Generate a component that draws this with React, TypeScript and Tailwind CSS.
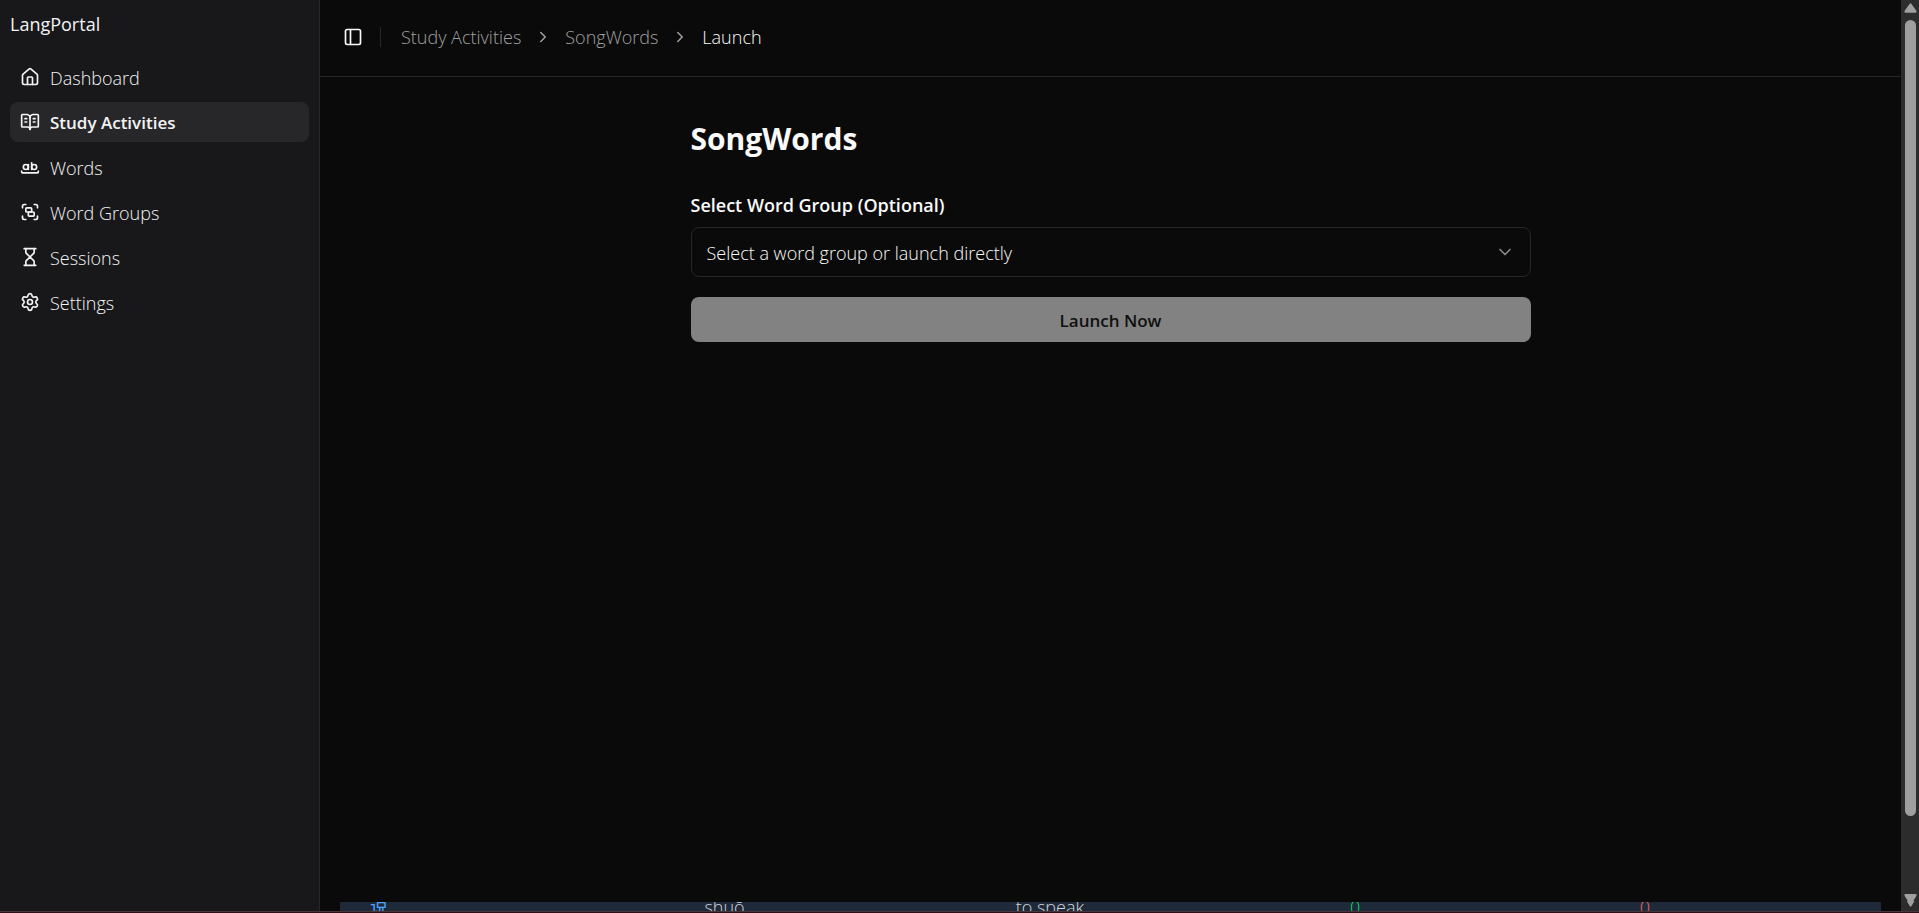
import type { ReactNode } from 'react';
import {
  BookOpenText,
  ChevronDown,
  ChevronRight,
  Group,
  Hourglass,
  House,
  PanelLeft,
  Settings,
  WholeWord,
  type LucideIcon,
} from 'lucide-react';

type NavItem = { label: string; icon: LucideIcon; active?: boolean };

const navItems: NavItem[] = [
  { label: 'Dashboard', icon: House },
  { label: 'Study Activities', icon: BookOpenText, active: true },
  { label: 'Words', icon: WholeWord },
  { label: 'Word Groups', icon: Group },
  { label: 'Sessions', icon: Hourglass },
  { label: 'Settings', icon: Settings },
];

function Sidebar() {
  return (
    <aside className="flex w-80 shrink-0 flex-col border-r border-[#27272a] bg-[#18181b] text-[#f4f4f5]">
      <div className="px-2.5 pt-2.5 pb-[19px] text-lg leading-7">LangPortal</div>
      <nav className="flex flex-col gap-[5px] px-2.5">
        {navItems.map(({ label, icon: Icon, active }) => (
          <a
            key={label}
            href="#"
            aria-current={active ? 'page' : undefined}
            className={
              active
                ? 'flex h-10 items-center gap-2.5 rounded-lg bg-[#27272a] px-2.5 text-[17px] font-semibold'
                : 'flex h-10 items-center gap-2.5 rounded-lg px-2.5 text-lg font-light'
            }
          >
            <Icon className="size-5 shrink-0" />
            <span className="pt-0.5">{label}</span>
          </a>
        ))}
      </nav>
    </aside>
  );
}

function Crumb({ children }: { children: ReactNode }) {
  return (
    <>
      <li>
        <a href="#">{children}</a>
      </li>
      <li aria-hidden="true">
        <ChevronRight className="size-[18px]" />
      </li>
    </>
  );
}

function Header() {
  return (
    <header className="flex h-[77px] shrink-0 items-center border-b border-[#27272a] px-5 pb-0.5">
      <button type="button" aria-label="Toggle sidebar" className="flex h-9 items-center px-[3px] text-[#fafafa]">
        <PanelLeft className="size-5" />
      </button>
      <div className="ml-3.5 h-5 w-px bg-[#27272a]" />
      <nav aria-label="Breadcrumb" className="ml-5">
        <ol className="flex items-center gap-[13px] text-lg font-light text-[#a1a1a1]">
          <Crumb>Study Activities</Crumb>
          <Crumb>SongWords</Crumb>
          <li aria-current="page" className="text-[#fafafa]">
            Launch
          </li>
        </ol>
      </nav>
    </header>
  );
}

function LaunchForm() {
  return (
    <form className="mx-auto flex w-full max-w-[840px] flex-col pt-10">
      <h1 className="text-3xl leading-[44px] font-bold">SongWords</h1>
      <label htmlFor="group" className="mt-8 text-lg leading-6 font-semibold">
        Select Word Group (Optional)
      </label>
      <div className="mt-2.5 grid items-center">
        <select
          id="group"
          className="col-start-1 row-start-1 h-[50px] appearance-none rounded-lg border border-[#27272a] bg-[#0a0a0a] px-[15px] pt-0.5 text-lg font-light text-[#fafafa]"
        >
          <option>Select a word group or launch directly</option>
        </select>
        <ChevronDown className="pointer-events-none col-start-1 row-start-1 mr-4 size-5 justify-self-end text-[#8a8a8a]" />
      </div>
      <button
        type="submit"
        disabled
        className="mt-5 h-[45px] rounded-lg bg-[#828282] pt-0.5 text-[17px] font-semibold text-[#101010]"
      >
        Launch Now
      </button>
    </form>
  );
}

function WordStrip() {
  return (
    <div className="mx-5 flex h-[9px] shrink-0 items-center overflow-hidden bg-gray-800">
      <table className="w-full table-fixed text-left text-lg leading-6 font-light text-gray-300">
        <tbody>
          <tr>
            <td className="w-[21.7%] pl-[30px] font-normal text-blue-400">说</td>
            <td className="w-[20.2%] pl-[30px]">shuō</td>
            <td className="w-[21.7%] pl-[30px]">to speak</td>
            <td className="w-[18.8%] pl-[30px] text-green-400">0</td>
            <td className="pl-[30px] text-red-400">0</td>
          </tr>
        </tbody>
      </table>
    </div>
  );
}

function Scrollbar() {
  return (
    <div aria-hidden="true" className="flex w-[18px] shrink-0 flex-col items-center bg-[#2c2c2c]">
      <svg viewBox="0 0 18 20" className="h-5 w-[18px] shrink-0" fill="#9f9f9f">
        <path d="M10.300 3.700 15.500 11q.6 1.800-1 1.800H4.500q-1.600 0-1-1.800L8.700 3.700q.8-.8 1.600 0z" />
      </svg>
      <div className="w-[11px] flex-[796] rounded-full bg-[#9f9f9f]" />
      <div className="flex-[77]" />
      <svg viewBox="0 0 18 18" className="h-[18px] w-[18px] shrink-0" fill="#9f9f9f">
        <path d="M4.500 1h10q1.800.2 1 1.800L12.300 8h1.200l-3 5q-.9 1.300-1.800 0l-3-5h1.200L3.500 2.800Q2.800 1.200 4.500 1z" />
      </svg>
    </div>
  );
}

export default function App() {
  return (
    <div className="flex h-screen flex-col bg-[#0a0a0a] font-['Open_Sans','Noto_Sans_CJK_SC',sans-serif] text-[#fafafa]">
      <div className="flex min-h-0 flex-1">
        <Sidebar />
        <div className="flex min-w-0 flex-1 flex-col">
          <Header />
          <main className="flex min-h-0 flex-1 flex-col justify-between">
            <LaunchForm />
            <WordStrip />
          </main>
        </div>
        <Scrollbar />
      </div>
      <div className="h-0.5 shrink-0 border-t border-[#4a3638] bg-[#2d0f18]" />
    </div>
  );
}
